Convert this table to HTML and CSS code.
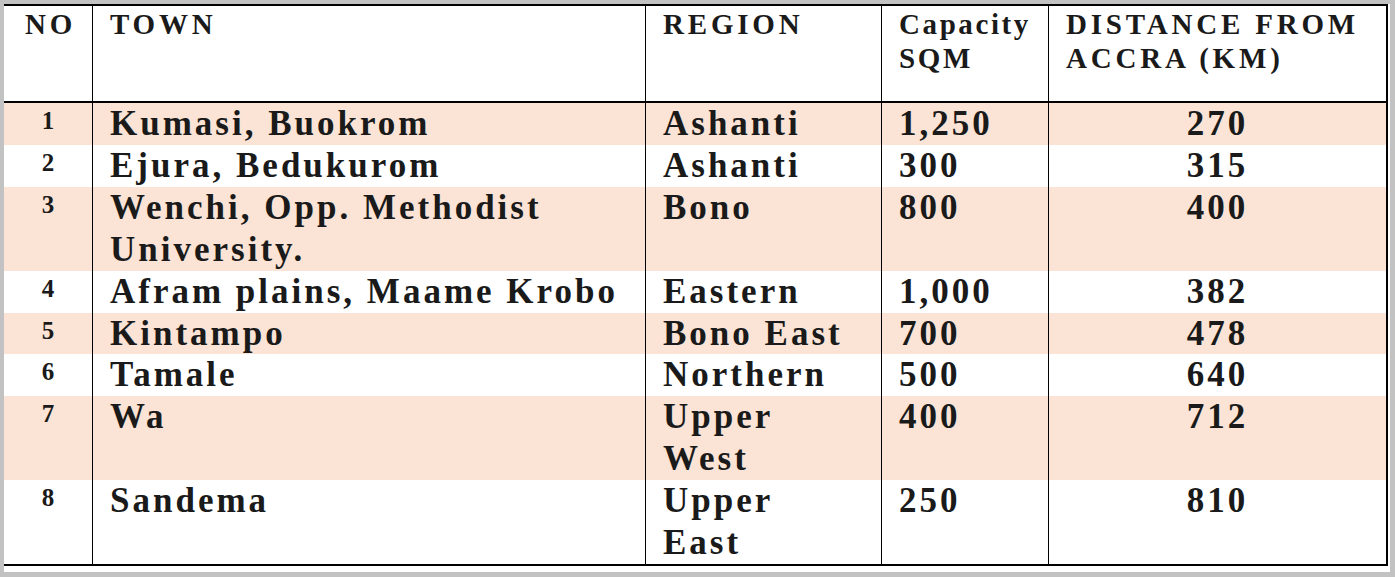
FILE: index.html
```html
<!DOCTYPE html>
<html lang="en">
<head>
<meta charset="utf-8">
<title>Warehouse locations</title>
<link rel="stylesheet" href="styles.css">
</head>
<body>
<div class="page">
  <table class="towns">
    <colgroup>
      <col class="c-no">
      <col class="c-town">
      <col class="c-region">
      <col class="c-cap">
      <col class="c-dist">
    </colgroup>
    <thead>
      <tr>
        <th class="no">NO</th>
        <th>TOWN</th>
        <th>REGION</th>
        <th class="cap">Capacity SQM</th>
        <th>DISTANCE FROM ACCRA (KM)</th>
      </tr>
    </thead>
    <tbody>
      <tr class="shade">
        <td class="no">1</td><td class="town">Kumasi, Buokrom</td><td class="region">Ashanti</td><td>1,250</td><td class="dist">270</td>
      </tr>
      <tr>
        <td class="no">2</td><td class="town">Ejura, Bedukurom</td><td class="region">Ashanti</td><td>300</td><td class="dist">315</td>
      </tr>
      <tr class="shade">
        <td class="no">3</td><td class="town">Wenchi, Opp. Methodist University.</td><td class="region">Bono</td><td>800</td><td class="dist">400</td>
      </tr>
      <tr>
        <td class="no">4</td><td class="town">Afram plains, Maame Krobo</td><td class="region">Eastern</td><td>1,000</td><td class="dist">382</td>
      </tr>
      <tr class="shade">
        <td class="no">5</td><td class="town">Kintampo</td><td class="region">Bono East</td><td>700</td><td class="dist">478</td>
      </tr>
      <tr>
        <td class="no">6</td><td class="town">Tamale</td><td class="region">Northern</td><td>500</td><td class="dist">640</td>
      </tr>
      <tr class="shade">
        <td class="no">7</td><td class="town">Wa</td><td class="region">Upper West</td><td>400</td><td class="dist">712</td>
      </tr>
      <tr>
        <td class="no">8</td><td class="town">Sandema</td><td class="region">Upper East</td><td>250</td><td class="dist">810</td>
      </tr>
    </tbody>
  </table>
</div>
</body>
</html>
```
FILE: styles.css
```css
html, body {
  margin: 0;
  padding: 0;
}

body {
  background: #c2c2c2;
  width: 1395px;
  height: 577px;
  overflow: hidden;
}

.page {
  background: #ffffff;
  margin: 4px 0 0 4px;
  width: 1386px;
  height: 568px;
}

.towns {
  border-collapse: separate;
  border-spacing: 0;
  table-layout: fixed;
  width: 1384px;
  border-top: 2px solid #000;
  border-bottom: 2px solid #000;
  font-family: "Liberation Serif", "Times New Roman", serif;
  font-weight: bold;
  color: #1a1a1a;
}

.c-no { width: 89px; }
.c-town { width: 553px; }
.c-region { width: 236px; }
.c-cap { width: 167px; }
.c-dist { width: 339px; }

.towns th,
.towns td {
  border-right: 1px solid #000;
  vertical-align: top;
  text-align: left;
  padding: 0 17px;
}

.towns th:last-child,
.towns td:last-child {
  border-right: 2px solid #000;
}

.towns th {
  height: 94px;
  box-sizing: content-box;
  padding: 1px 4px 0 17px;
  border-bottom: 2px solid #000;
  font-size: 29px;
  line-height: 34px;
  letter-spacing: 3.8px;
  font-weight: bold;
}

.towns th.cap {
  letter-spacing: 2.6px;
}

.towns td {
  font-size: 35px;
  line-height: 41.9px;
  letter-spacing: 3px;
}

.towns td.town {
  padding-right: 8px;
}

.towns td.region {
  padding-right: 30px;
}

.towns .no {
  text-align: center;
  padding: 0;
}

.towns td.no {
  font-size: 25px;
  line-height: 35px;
  letter-spacing: 0;
}

.towns th.no {
  padding-top: 1px;
  padding-left: 5px;
}

.towns td.dist {
  text-align: center;
}

.shade td {
  background: #fbe4d5;
}
```
